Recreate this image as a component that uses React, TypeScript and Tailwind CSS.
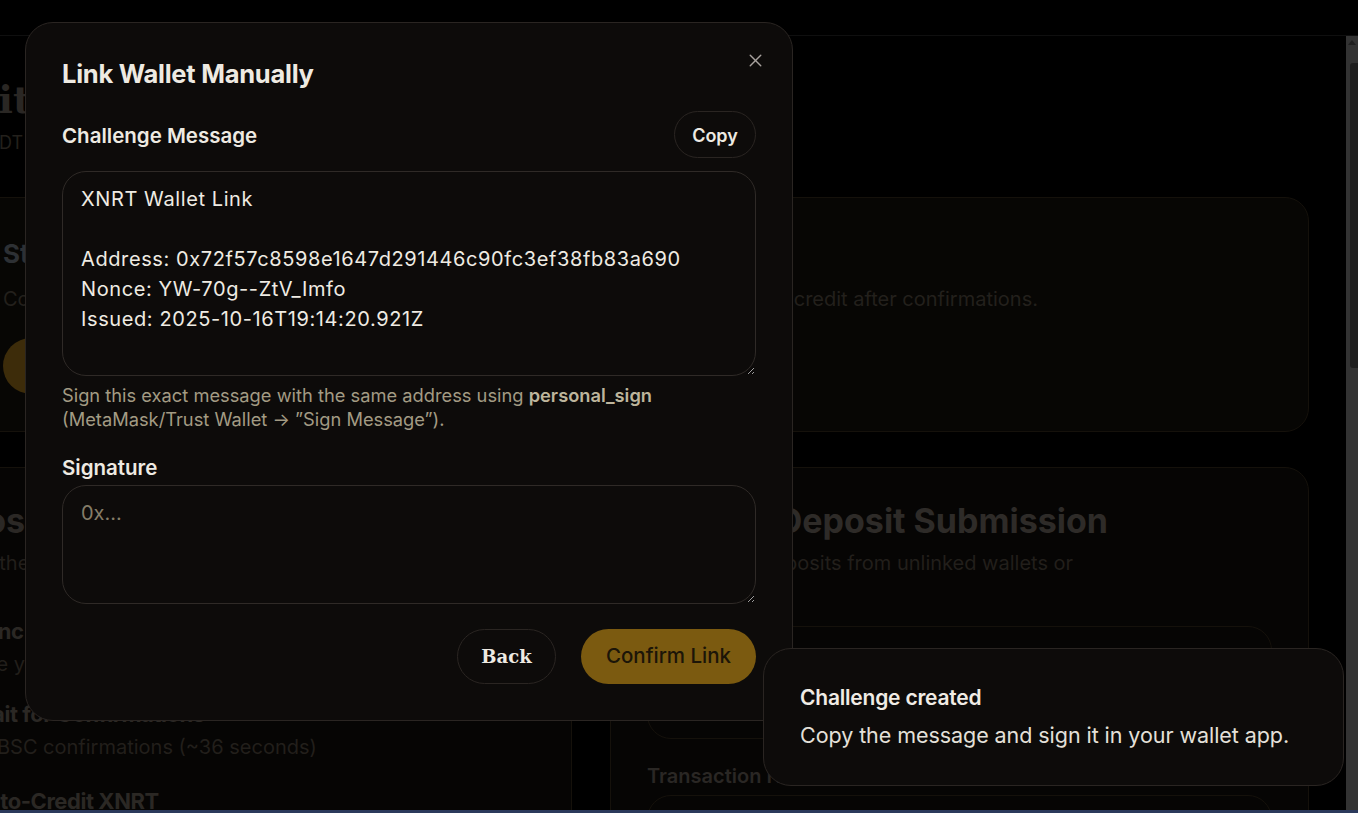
import { X } from 'lucide-react'

const message = `XNRT Wallet Link

Address: 0x72f57c8598e1647d291446c90fc3ef38fb83a690
Nonce: YW-70g--ZtV_Imfo
Issued: 2025-10-16T19:14:20.921Z`

function Step({ title, text, className = '' }: { title: string; text?: string; className?: string }) {
  return (
    <div className={`flex gap-4 ${className}`}>
      <div className="mt-1 h-[34px] w-[34px] shrink-0 rounded-full bg-[#1a1407]" />
      <div>
        <div className="text-[22px] font-bold leading-[30px] tracking-[-0.02em] text-[#2b2824]">{title}</div>
        {text && <div className="mt-[3px] text-[20px] leading-[30px] text-[#221f1b]">{text}</div>}
      </div>
    </div>
  )
}

function BackgroundPage() {
  return (
    <div className="flex h-[774px]">
      <main className="flex-1 overflow-hidden">
        <div className="-ml-[110px] w-[1420px] pt-[40px]">
          <h1 className="ml-[-22px] font-['DejaVu_Serif'] text-[38px] font-bold leading-[48px] text-[#2a2724]">Deposit</h1>
          <p className="ml-[14px] mt-[5px] text-[18px] leading-[28px] text-[#23201c]">Deposit USDT on BNB Smart Chain</p>

          {/* Start deposit card */}
          <section className="mt-[40px] flex w-[1419px] gap-5 rounded-[24px] border border-[#15110b] bg-[#070604] px-9 pb-[37px] pt-[36px]">
            <div className="h-[56px] w-[56px] shrink-0 rounded-2xl bg-[#120e07]" />
            <div>
              <h2 className="text-[26px] font-bold leading-[40px] text-[#2d3034]">Start a Deposit</h2>
              <p className="mt-[10px] text-[20px] leading-[30px] text-[#23201c]">
                Connect your linked wallet, send USDT to your deposit address and XNRT will auto-credit after confirmations.
              </p>
              <div className="mt-6 h-[56px] w-[200px] rounded-full bg-[#3d2c0a]" />
            </div>
          </section>

          <div className="mt-[35px] flex gap-[38px]">
            {/* Steps card */}
            <section className="h-[400px] w-[682px] rounded-[24px] border border-[#15110b] bg-[#060504] px-9 pt-[33px]">
              <h2 className="ml-[-8px] text-[34px] font-bold leading-[40px] text-[#2b2825]">Deposit Steps</h2>
              <p className="ml-[6px] mt-[7px] text-[20px] leading-[30px] text-[#221f1b]">Follow these steps to credit your account</p>
              <div className="ml-[-6px]">
                <Step className="mt-[38px]" title="Sync Wallet" text="Use your linked wallet address" />
                <Step className="mt-[20px]" title="Wait for Confirmations" text="12 BSC confirmations (~36 seconds)" />
                <Step className="mt-[24px]" title="Auto-Credit XNRT" />
              </div>
            </section>

            {/* Manual submission card */}
            <section className="h-[400px] w-[699px] rounded-[24px] border border-[#15110b] bg-[#060504] px-9 pt-[33px]">
              <h2 className="text-[34px] font-bold leading-[40px] text-[#2e2b28]">Manual Deposit Submission</h2>
              <p className="mt-[7px] text-[20px] leading-[30px] text-[#221f1b]">
                Use this for deposits from unlinked wallets or
                <br />
                credits missing
              </p>
              <div className="mt-[18px] h-[113px] rounded-[24px] border border-[#15110b]" />
              <div className="mt-[24px] text-[20px] font-semibold leading-[26px] text-[#2a2724]">Transaction Hash</div>
              <div className="mt-[6px] h-[50px] rounded-[24px] border border-[#15110b]" />
            </section>
          </div>
        </div>
      </main>
      {/* scrollbar */}
      <div className="flex w-[12px] flex-col items-end bg-[#333333]">
        <div className="mx-auto mt-[4px] h-0 w-0 border-x-[4px] border-b-[5px] border-x-transparent border-b-[#1f1f1f]" />
        <div className="mt-[18px] h-[305px] w-[8px] rounded-l-[3px] bg-[#1f1f1f]" />
      </div>
    </div>
  )
}

export default function App() {
  return (
    <div className="relative h-[813px] w-[1358px] overflow-hidden bg-black font-['Inter',sans-serif]">
      <header className="h-[36px] border-b border-[#0f0f0f]" />
      <BackgroundPage />
      <div className="h-[3px] bg-[#2b3a5c]" />

      {/* Dialog */}
      <div className="absolute left-[25px] top-[22px] w-[768px] rounded-[28px] border border-[#2a2522] bg-[#0d0b0a] p-9">
        <button className="absolute right-[26px] top-[27px] text-[#a8a29e]">
          <X size={21} strokeWidth={1.6} />
        </button>
        <h2 className="text-[25.5px] font-bold leading-[30px] tracking-[-0.01em] text-[#eeeae2]">Link Wallet Manually</h2>

        <div className="mt-[22px] flex items-center justify-between">
          <label className="pt-[3px] text-[20.5px] font-semibold text-[#eeeae2]">Challenge Message</label>
          <button className="h-[47px] w-[82px] rounded-full border border-[#2a2522] bg-[#0d0b0a] pt-[2px] text-[18px] font-semibold text-[#eeeae2]">
            Copy
          </button>
        </div>
        <textarea
          readOnly
          value={message}
          className="mt-[13px] block h-[205px] w-full rounded-[24px] border border-[#2f2a27] bg-[#0d0b0a] px-[18px] pt-[12px] text-[20px] leading-[30px] tracking-[0.03em] text-[#efebe3] outline-none"
        />
        <p className="mt-[7px] text-[18.3px] leading-[24px] text-[#a39b84]">
          Sign this exact message with the same address using{' '}
          <span className="font-semibold text-[#bdb59c]">personal_sign</span>
          <br />
          (MetaMask/Trust Wallet → ”Sign Message”).
        </p>

        <label className="mt-[24px] block text-[20.5px] font-semibold leading-[26px] text-[#eeeae2]">Signature</label>
        <textarea
          placeholder="0x..."
          className="mt-[4px] block h-[119px] w-full rounded-[24px] border border-[#2f2a27] bg-[#0d0b0a] px-[18px] pt-[12px] text-[20px] leading-[30px] text-[#efebe3] outline-none placeholder:text-[#857d68]"
        />

        <div className="mt-[25px] flex justify-end gap-[25px]">
          <button className="h-[55px] w-[99px] rounded-full border border-[#2a2522] bg-[#0d0b0a] font-['DejaVu_Serif'] text-[18px] font-bold text-[#eeeae2]">
            Back
          </button>
          <button className="h-[55px] w-[175px] rounded-full bg-[#7b5a10] text-[20.5px] font-medium text-[#1c1508]">
            Confirm Link
          </button>
        </div>
      </div>

      {/* Toast */}
      <div className="absolute left-[763px] top-[648px] h-[138px] w-[581px] rounded-[28px] border border-[#2a2522] bg-[#0d0b0a] px-9 pt-[36px]">
        <div className="text-[21px] font-semibold leading-[26px] tracking-[-0.01em] text-[#f0ece5]">Challenge created</div>
        <div className="mt-[11px] text-[21.5px] leading-[26px] tracking-[-0.003em] text-[#e4e0d9]">Copy the message and sign it in your wallet app.</div>
      </div>
    </div>
  )
}
